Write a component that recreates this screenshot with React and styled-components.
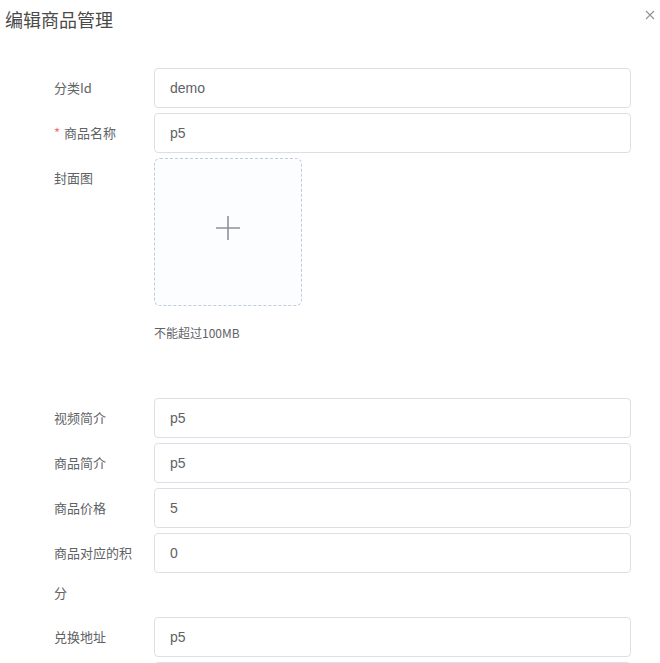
import React from "react";
import styled, { createGlobalStyle } from "styled-components";

const Global = createGlobalStyle`
  html, body { margin: 0; padding: 0; background: #fff; }
  body { font-family: "Liberation Sans", "Noto Sans CJK SC", sans-serif; }
  * { box-sizing: border-box; }
`;

const Dialog = styled.div`
  width: 660px;
  background: #fff;
`;

const Header = styled.div`
  display: flex;
  justify-content: space-between;
  align-items: flex-start;
  padding: 7px 4px 0 5px;
`;

const Title = styled.span`
  font-size: 18px;
  line-height: 24px;
  color: #4a4a4a;
  font-family: "Noto Sans CJK SC", sans-serif;
`;

const CloseBtn = styled.button`
  border: 0;
  background: none;
  padding: 0;
  margin-top: 2px;
  width: 12px;
  height: 12px;
  display: flex;
  align-items: center;
  justify-content: center;
  cursor: pointer;
`;

const Form = styled.div`
  padding: 37px 29px 0 54px;
`;

const Item = styled.div`
  display: flex;
  align-items: flex-start;
  margin-bottom: ${(p) => p.$mb ?? 5}px;
`;

const Label = styled.label`
  width: 100px;
  flex: none;
  padding-right: 12px;
  font-size: 13px;
  line-height: 40px;
  color: #606266;
  font-family: "Noto Sans CJK SC", sans-serif;
`;

const Star = styled.span`
  color: #f56c6c;
  margin-right: 4px;
`;

const Content = styled.div`
  flex: 1;
  min-width: 0;
`;

const Input = styled.input`
  display: block;
  width: 100%;
  height: 40px;
  border: 1px solid #dcdfe6;
  border-radius: 4px;
  padding: 0 15px;
  font-size: 14px;
  color: #606266;
  font-family: "Liberation Sans", "Noto Sans CJK SC", sans-serif;
  outline: none;
  background: #fff;
`;

const UploadBox = styled.div`
  width: 148px;
  height: 148px;
  border: 1px dashed #c0ccda;
  border-radius: 6px;
  background: #fbfdff;
  display: flex;
  align-items: center;
  justify-content: center;
  cursor: pointer;

  svg {
    margin-bottom: 8px;
  }
`;

const Tip = styled.div`
  margin-top: 17px;
  padding-bottom: 50px;
  font-size: 12px;
  line-height: 20px;
  color: #606266;
  font-family: "Noto Sans CJK SC", sans-serif;
`;

const fields = [
  { label: "视频简介", value: "p5" },
  { label: "商品简介", value: "p5" },
  { label: "商品价格", value: "5" },
  { label: "商品对应的积分", value: "0", mb: 4 },
  { label: "兑换地址", value: "p5" },
  { label: "", value: "" },
];

export default function App() {
  return (
    <Dialog>
      <Global />
      <Header>
        <Title>编辑商品管理</Title>
        <CloseBtn aria-label="关闭">
          <svg width="10" height="10" viewBox="0 0 10 10">
            <path d="M1 1 L9 9 M9 1 L1 9" stroke="#909399" strokeWidth="1.1" fill="none" />
          </svg>
        </CloseBtn>
      </Header>
      <Form>
        <Item>
          <Label>分类Id</Label>
          <Content>
            <Input defaultValue="demo" />
          </Content>
        </Item>
        <Item>
          <Label>
            <Star>*</Star>商品名称
          </Label>
          <Content>
            <Input defaultValue="p5" />
          </Content>
        </Item>
        <Item>
          <Label>封面图</Label>
          <Content>
            <UploadBox>
              <svg width="24" height="24" viewBox="0 0 24 24">
                <path d="M12 0 V24 M0 12 H24" stroke="#8c939d" strokeWidth="1.6" fill="none" />
              </svg>
            </UploadBox>
            <Tip>不能超过100MB</Tip>
          </Content>
        </Item>
        {fields.map((f, i) => (
          <Item key={i} $mb={f.mb}>
            <Label>{f.label}</Label>
            <Content>
              <Input defaultValue={f.value} />
            </Content>
          </Item>
        ))}
      </Form>
    </Dialog>
  );
}
